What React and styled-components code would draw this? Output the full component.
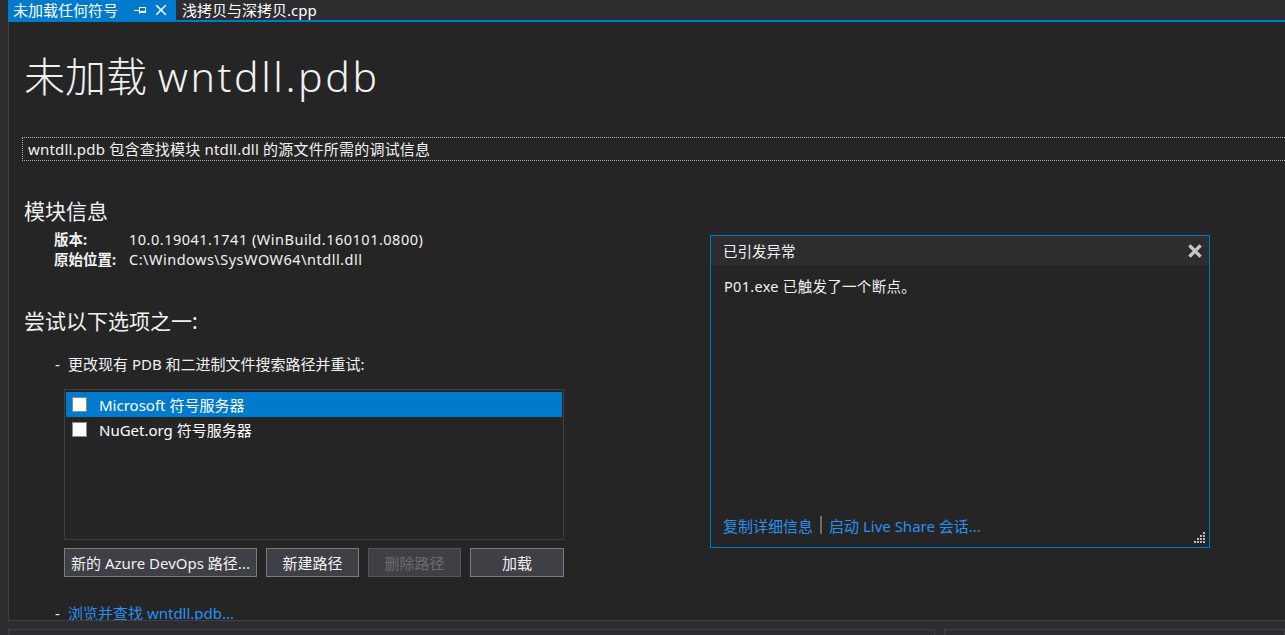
import React from "react";
import styled, { createGlobalStyle } from "styled-components";

const FONT = `"Segoe UI", "Noto Sans", "Noto Sans CJK SC", sans-serif`;

const GlobalStyle = createGlobalStyle`
  html, body {
    margin: 0;
    padding: 0;
    background: #2d2d30;
    overflow: hidden;
  }
  * { box-sizing: border-box; }
`;

const Shell = styled.div`
  width: 1285px;
  height: 635px;
  display: flex;
  flex-direction: column;
  background: #2d2d30;
  font-family: ${FONT};
  color: #f1f1f1;
  overflow: hidden;
`;

const TabBar = styled.div`
  height: 20px;
  display: flex;
  align-items: stretch;
  padding-left: 8px;
  gap: 1px;
`;

const Tab = styled.div`
  display: flex;
  align-items: center;
  height: 20px;
  padding: ${(p) => (p.active ? "0 9px 0 5px" : "0 5px")};
  width: ${(p) => (p.w ? p.w : "auto")};
  background: ${(p) => (p.active ? "#007acc" : "transparent")};
  color: #ffffff;
  font-size: 15px;
  line-height: 20px;
  white-space: nowrap;
`;

const TabLabel = styled.span`
  flex: 1;
`;

const TabIcon = styled.span`
  display: flex;
  align-items: center;
  margin-left: ${(p) => (p.ml ? p.ml : "0")};
`;

const BlueRule = styled.div`
  height: 2px;
  margin-left: 8px;
  background: #007acc;
`;

const Doc = styled.div`
  position: relative;
  height: 599px;
  margin-left: 8px;
  border-left: 1px solid #3f3f46;
  border-bottom: 1px solid #3f3f46;
  background: #252526;
  padding-left: 15px;
  overflow: hidden;
`;

const Title = styled.h1`
  margin: 30px 0 0 0;
  font-size: 41px;
  font-weight: 300;
  line-height: 48px;
  color: #f1f1f1;
`;

const Wide = styled.span`
  letter-spacing: ${(p) => p.ls};
`;

const Summary = styled.div`
  margin: 37px -20px 0 -2px;
  height: 24px;
  border: 1px dotted #b0b0b0;
  padding: 0 5px;
  font-size: 15px;
  letter-spacing: 0.2px;
  line-height: 22px;
`;

const Heading = styled.h2`
  margin: ${(p) => p.m};
  font-size: 21px;
  font-weight: 400;
  line-height: 28px;
`;

const InfoGrid = styled.div`
  margin: 4px 0 0 30px;
  display: grid;
  grid-template-columns: 75px auto;
  font-size: 14.5px;
  line-height: 20px;
`;

const InfoKey = styled.span`
  font-weight: 700;
`;

const InfoValue = styled.span`
  letter-spacing: 0.5px;
`;

const Bullet = styled.div`
  display: flex;
  margin: ${(p) => p.m};
  padding-left: 31px;
  font-size: 15px;
  line-height: 18px;
  gap: 8px;
`;

const Dash = styled.span`
  color: #f1f1f1;
  width: 5px;
`;

const Link = styled.a`
  color: #2a90ef;
  font-size: 15px;
  text-decoration: none;
  cursor: pointer;
`;

const ListBox = styled.div`
  margin: 16px 0 0 40px;
  width: 500px;
  height: 151px;
  border: 1px solid #3f3f46;
  padding: 2px 1px;
`;

const ListItem = styled.div`
  display: flex;
  align-items: center;
  height: 25px;
  padding-left: 6px;
  gap: 12px;
  background: ${(p) => (p.selected ? "#007acc" : "transparent")};
  font-size: 15px;
  color: #ffffff;
`;

const Check = styled.span`
  width: 15px;
  height: 15px;
  background: #ffffff;
  border: 1px solid #8a8a8a;
  flex: none;
`;

const ButtonRow = styled.div`
  display: flex;
  margin: 8px 0 0 40px;
  gap: 9px;
`;

const Button = styled.button`
  width: ${(p) => p.w};
  height: 29px;
  padding: 0 2px;
  background: #3f3f46;
  border: 1px solid ${(p) => (p.disabled ? "#555558" : "#7a7a80")};
  color: ${(p) => (p.disabled ? "#6d6d6d" : "#f1f1f1")};
  font-family: ${FONT};
  font-size: 15px;
  white-space: nowrap;
  overflow: hidden;
`;

const Popup = styled.div`
  position: absolute;
  left: 701px;
  top: 213px;
  width: 500px;
  height: 313px;
  border: 1px solid #007acc;
  background: #252526;
  display: flex;
  flex-direction: column;
`;

const PopupHeader = styled.div`
  height: 29px;
  background: #2d2d30;
  display: flex;
  align-items: center;
  justify-content: space-between;
  padding: 0 7px 0 12px;
  font-size: 14.5px;
`;

const PopupBody = styled.div`
  flex: 1;
  padding: 10px 13px;
  font-size: 14.5px;
  letter-spacing: 0.3px;
  line-height: 22px;
`;

const PopupFooter = styled.div`
  position: relative;
  display: flex;
  align-items: center;
  height: 36px;
  padding: 0 12px 8px;
  gap: 7px;
`;

const Sep = styled.span`
  width: 2px;
  height: 18px;
  background: #6d6d6d;
`;

const Grip = styled.svg`
  position: absolute;
  right: 3px;
  bottom: 3px;
`;

const BottomStrip = styled.div`
  flex: 1;
  display: flex;
  gap: 9px;
  padding: 8px 0 0 8px;
`;

const Pane = styled.div`
  width: ${(p) => (p.w ? p.w : "auto")};
  flex: ${(p) => (p.w ? "none" : "1")};
  border-top: 1px solid #3f3f46;
  border-left: 1px solid #3f3f46;
  border-right: 1px solid #3f3f46;
  background: #2d2d30;
`;

const PinIcon = () => (
  <svg width="13" height="10" viewBox="0 0 13 10">
    <path d="M0 5 H5 M5 1.5 V8.5 M5 2.5 H11 V7.5 H5 M5 6 H11" stroke="#fff" strokeWidth="1" fill="none" shapeRendering="crispEdges" />
  </svg>
);

const CloseIcon = ({ size = 10, color = "#fff", w = 1.3 }) => (
  <svg width={size} height={size} viewBox="0 0 10 10">
    <path d="M1 1 L9 9 M9 1 L1 9" stroke={color} strokeWidth={w} />
  </svg>
);

export default function App() {
  return (
    <Shell>
      <GlobalStyle />
      <TabBar>
        <Tab active w="168px">
          <TabLabel>未加载任何符号</TabLabel>
          <TabIcon><PinIcon /></TabIcon>
          <TabIcon ml="8px"><CloseIcon size={12} /></TabIcon>
        </Tab>
        <Tab>浅拷贝与深拷贝.cpp</Tab>
      </TabBar>
      <BlueRule />
      <Doc>
        <Title>
          未加载 <Wide ls="2.6px">wntdll.pdb</Wide>
        </Title>
        <Summary>wntdll.pdb 包含查找模块 ntdll.dll 的源文件所需的调试信息</Summary>
        <Heading m="36px 0 0 0">模块信息</Heading>
        <InfoGrid>
          <InfoKey>版本:</InfoKey>
          <InfoValue>10.0.19041.1741 (WinBuild.160101.0800)</InfoValue>
          <InfoKey>原始位置:</InfoKey>
          <InfoValue>C:\Windows\SysWOW64\ntdll.dll</InfoValue>
        </InfoGrid>
        <Heading m="38px 0 0 0">尝试以下选项之一:</Heading>
        <Bullet m="20px 0 0 0">
          <Dash>-</Dash>
          <span>更改现有 PDB 和二进制文件搜索路径并重试:</span>
        </Bullet>
        <ListBox>
          <ListItem selected>
            <Check />
            Microsoft 符号服务器
          </ListItem>
          <ListItem>
            <Check />
            NuGet.org 符号服务器
          </ListItem>
        </ListBox>
        <ButtonRow>
          <Button w="193px">新的 Azure DevOps 路径...</Button>
          <Button w="93px">新建路径</Button>
          <Button w="93px" disabled>删除路径</Button>
          <Button w="94px">加载</Button>
        </ButtonRow>
        <Bullet m="27px 0 0 0">
          <Dash>-</Dash>
          <Link>浏览并查找 wntdll.pdb...</Link>
        </Bullet>

        <Popup>
          <PopupHeader>
            <span>已引发异常</span>
            <CloseIcon size={14} color="#c8c8c8" w={2.4} />
          </PopupHeader>
          <PopupBody>P01.exe 已触发了一个断点。</PopupBody>
          <PopupFooter>
            <Link>复制详细信息</Link>
            <Sep />
            <Link>启动 Live Share 会话...</Link>
            <Grip width="12" height="12" viewBox="0 0 12 12">
              {[
                [9, 0], [9, 3], [6, 3], [9, 6], [6, 6], [3, 6],
                [9, 9], [6, 9], [3, 9], [0, 9],
              ].map(([x, y]) => (
                <rect key={`${x}-${y}`} x={x} y={y} width="2" height="2" fill="#bdbdbd" />
              ))}
            </Grip>
          </PopupFooter>
        </Popup>
      </Doc>
      <BottomStrip>
        <Pane w="927px" />
        <Pane />
      </BottomStrip>
    </Shell>
  );
}
